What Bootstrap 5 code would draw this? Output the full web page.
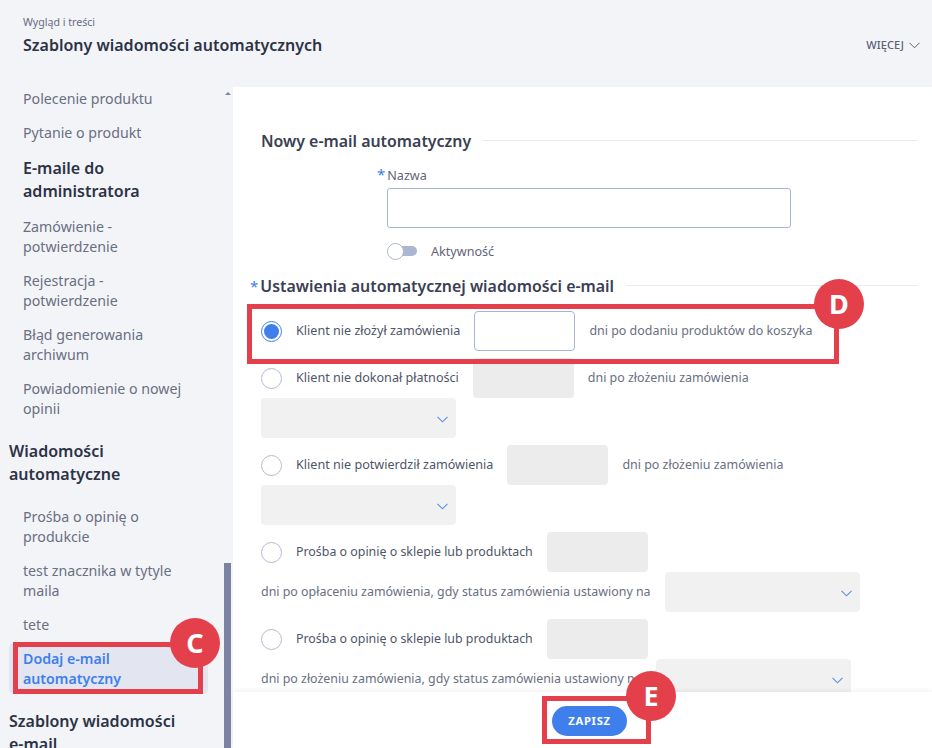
<!DOCTYPE html>
<html lang="pl">
<head>
<meta charset="utf-8">
<title>Szablony wiadomości automatycznych</title>
<link href="https://cdn.jsdelivr.net/npm/bootstrap@5.3.0/dist/css/bootstrap.min.css" rel="stylesheet">
<style>
html,body{height:100%}
body{width:932px;height:748px;overflow:hidden;background:#f3f4f8;font-family:"Noto Sans",sans-serif;color:#5f6478;position:relative}
.top-head{height:87px;padding:14px 12px 0 23px}
.crumb{font-size:10.6px;line-height:16px;color:#666b7d}
.page-title{font-size:16px;line-height:28px;font-weight:600;color:#2c3345;margin:1px 0 0}
.more-link{font-size:11.1px;font-weight:500;color:#5b6177;margin-top:23px;gap:5px}
.body-row{height:661px}
.side-col{width:233px;flex:none;position:relative;overflow:hidden}
.side-list{padding:2px 0 0 9px;width:224px}
.side-link{display:block;font-size:14.2px;line-height:20px;color:#6a6f82;margin:0 0 14px 14px;width:170px;text-decoration:none}
.side-head{font-size:16px;line-height:23px;font-weight:600;color:#2c3345;width:180px}
.side-head.nested{margin:13.5px 0 13.5px 14px;width:150px}
.side-head.top{margin:21.5px 0 20.5px;width:130px}
.side-head.last{margin-top:16.5px}
.side-active{display:block;width:199px;background:#e3e6f0;border-radius:5px;color:#3f7fec;font-weight:600;padding:6px 14px 5px;font-size:14.2px;line-height:20px;margin-top:-6px;text-decoration:none}
.bar-thumb{position:absolute;left:224px;top:476px;width:7px;height:190px;background:#7a84a0}
.bar-arrow{position:absolute;left:224.5px;top:4.5px;width:0;height:0;border:3px solid transparent;border-top:0;border-bottom:3px solid #7a84a0}
.main-col{flex:1;background:#fff;position:relative;display:flex;flex-direction:column;min-width:0}
.form-area{height:605px;overflow:hidden;padding:43px 14px 0 28px}
.sec-line{display:flex;align-items:center;gap:12px;position:relative}
.sec-line h2{font-size:15.9px;line-height:22px;font-weight:600;color:#3a4052;margin:0;white-space:nowrap}
.sec-line::after{content:"";flex:1;height:1px;background:#e9ebef;margin-top:-2px}
.req{color:#3f7fec}
.name-label{font-size:12.6px;line-height:16px;margin:14px 0 4px 116px;color:#5f6478;position:relative}
.name-label .req{font-size:15px;margin-right:2px}
.name-input{width:404px;height:40px;margin-left:126px;border:1px solid #a9b5d0;border-radius:3px;box-shadow:none}
.toggle-row{margin:14px 0 0 126px;display:flex;align-items:center;height:18px;font-size:12.6px}
.toggle-text{padding-top:2px}
.tog{width:30px;height:17px;position:relative;flex:none;margin-right:14px}
.tog::before{content:"";position:absolute;left:8px;right:0;top:3px;height:10px;border-radius:0 5px 5px 0;background:#adb6d0}
.tog::after{content:"";position:absolute;left:0;top:0;width:17px;height:17px;border-radius:50%;background:#fff;border:1px solid #a9b5d0}
.sec-two{margin:15px 0 0 -11px}
.sec-two .req{font-size:15px;margin-right:2px;font-weight:400}
.sec-two.sec-line h2{display:flex;align-items:center}
.opt-list{margin-top:14px}
.opt{display:flex;flex-wrap:wrap;align-items:center;margin-bottom:7px;font-size:12.6px;width:640px;color:#4f5568}
.opt-main{display:flex;align-items:center;height:40px;width:100%}
.opt-radio{width:21px;height:21px;border-radius:50%;border:1px solid #b4bbd3;flex:none;margin-right:14px;background:#fff;position:relative}
.opt-radio.on{border-color:#3f7fec}
.opt-radio.on::after{content:"";position:absolute;inset:2px;border-radius:50%;background:#3f7fec}
.opt-narrow{font-size:12.4px}
.opt-num{width:101px;height:40px;flex:none;border:0;background:#ececec;border-radius:4px;margin:0 14px}
.opt-num.live{background:#fff;border:1px solid #a9b5d0}
.opt-sel{height:40px;width:195px;flex:none;background:#f1f1f1;border-radius:4px;position:relative}
.opt-sel svg{position:absolute;right:8px;top:18px;width:11px;height:7px}
.tail{color:#6a6f82;white-space:nowrap;font-size:12.45px}
.opt-second{display:flex;align-items:center;height:40px;width:100%;white-space:nowrap}
.opt-second .tail{font-size:12.42px}
.opt-second .opt-sel{margin-left:14px}
.save-bar{height:56px;background:#fff;box-shadow:0 -2px 4px rgba(0,0,0,.05);display:flex;align-items:flex-start;justify-content:center;padding:14px 0 0 14px;position:relative;z-index:2}
.btn-save{width:75px;height:30px;padding:0;border-radius:15px;background:#3f7fec;border:0;color:#fff;font-size:11.2px;font-weight:700;letter-spacing:.7px}
.mark-box{position:absolute;border:5px solid #e4404b;z-index:5;pointer-events:none}
.mark-dot{position:absolute;width:50px;height:50px;border-radius:50%;background:#e4404b;color:#fff;font-size:27px;font-weight:700;line-height:50px;text-align:center;z-index:6;font-family:"Noto Sans",sans-serif}
</style>
</head>
<body>
<header class="top-head d-flex justify-content-between">
  <div>
    <div class="crumb">Wygląd i treści</div>
    <h1 class="page-title">Szablony wiadomości automatycznych</h1>
  </div>
  <div class="more-link d-flex align-items-center align-self-start">WIĘCEJ
    <svg width="11" height="7" viewBox="0 0 11 7" fill="none" stroke="#5b6177" stroke-width="1"><path d="M.5.8 5.5 5.8 10.5.8"/></svg>
  </div>
</header>
<div class="body-row d-flex">
  <aside class="side-col">
    <nav class="side-list">
      <a class="side-link" href="#">Polecenie produktu</a>
      <a class="side-link" href="#">Pytanie o produkt</a>
      <div class="side-head nested">E-maile do administratora</div>
      <a class="side-link" href="#">Zamówienie - potwierdzenie</a>
      <a class="side-link" href="#">Rejestracja - potwierdzenie</a>
      <a class="side-link" href="#">Błąd generowania archiwum</a>
      <a class="side-link" href="#">Powiadomienie o nowej opinii</a>
      <div class="side-head top">Wiadomości automatyczne</div>
      <a class="side-link" href="#">Prośba o opinię o produkcie</a>
      <a class="side-link" href="#">test znacznika w tytyle maila</a>
      <a class="side-link" href="#">tete</a>
      <a class="side-active" href="#">Dodaj e-mail automatyczny</a>
      <div class="side-head last">Szablony wiadomości e-mail</div>
    </nav>
    <span class="bar-arrow"></span>
    <span class="bar-thumb"></span>
  </aside>
  <main class="main-col">
    <div class="form-area">
      <div class="sec-line"><h2>Nowy e-mail automatyczny</h2></div>
      <div class="name-label"><span class="req">*</span>Nazwa</div>
      <input class="form-control name-input" type="text" aria-label="Nazwa">
      <div class="toggle-row"><span class="tog"></span><span class="toggle-text">Aktywność</span></div>
      <div class="sec-line sec-two"><h2><span class="req">*</span>Ustawienia automatycznej wiadomości e-mail</h2></div>
      <div class="opt-list">
        <div class="opt">
          <div class="opt-main"><span class="opt-radio on"></span>Klient nie złożył zamówienia<span class="opt-num live"></span><span class="tail">dni po dodaniu produktów do koszyka</span></div>
        </div>
        <div class="opt">
          <div class="opt-main"><span class="opt-radio"></span>Klient nie dokonał płatności<span class="opt-num"></span><span class="tail">dni po złożeniu zamówienia</span></div>
          <div class="opt-sel"><svg viewBox="0 0 11 7" fill="none" stroke="#5b8fe8" stroke-width="1.1"><path d="M.5.8 5.5 5.8 10.5.8"/></svg></div>
        </div>
        <div class="opt">
          <div class="opt-main"><span class="opt-radio"></span>Klient nie potwierdził zamówienia<span class="opt-num"></span><span class="tail">dni po złożeniu zamówienia</span></div>
          <div class="opt-sel"><svg viewBox="0 0 11 7" fill="none" stroke="#5b8fe8" stroke-width="1.1"><path d="M.5.8 5.5 5.8 10.5.8"/></svg></div>
        </div>
        <div class="opt">
          <div class="opt-main opt-narrow"><span class="opt-radio"></span>Prośba o opinię o sklepie lub produktach<span class="opt-num"></span></div>
          <div class="opt-second"><span class="tail">dni po opłaceniu zamówienia, gdy status zamówienia ustawiony na</span><div class="opt-sel"><svg viewBox="0 0 11 7" fill="none" stroke="#5b8fe8" stroke-width="1.1"><path d="M.5.8 5.5 5.8 10.5.8"/></svg></div></div>
        </div>
        <div class="opt">
          <div class="opt-main opt-narrow"><span class="opt-radio"></span>Prośba o opinię o sklepie lub produktach<span class="opt-num"></span></div>
          <div class="opt-second"><span class="tail">dni po złożeniu zamówienia, gdy status zamówienia ustawiony na</span><div class="opt-sel"><svg viewBox="0 0 11 7" fill="none" stroke="#5b8fe8" stroke-width="1.1"><path d="M.5.8 5.5 5.8 10.5.8"/></svg></div></div>
        </div>
      </div>
    </div>
    <div class="save-bar"><button class="btn btn-save" type="button">ZAPISZ</button></div>
  </main>
</div>
<div class="mark-box" style="left:247px;top:304px;width:592px;height:60px"></div>
<div class="mark-dot" style="left:814px;top:279px">D</div>
<div class="mark-box" style="left:13px;top:642px;width:190px;height:52px"></div>
<div class="mark-dot" style="left:170px;top:618px">C</div>
<div class="mark-box" style="left:542px;top:696px;width:109px;height:48px"></div>
<div class="mark-dot" style="left:626px;top:671px">E</div>
<script src="https://cdn.jsdelivr.net/npm/bootstrap@5.3.0/dist/js/bootstrap.bundle.min.js"></script>
</body>
</html>
